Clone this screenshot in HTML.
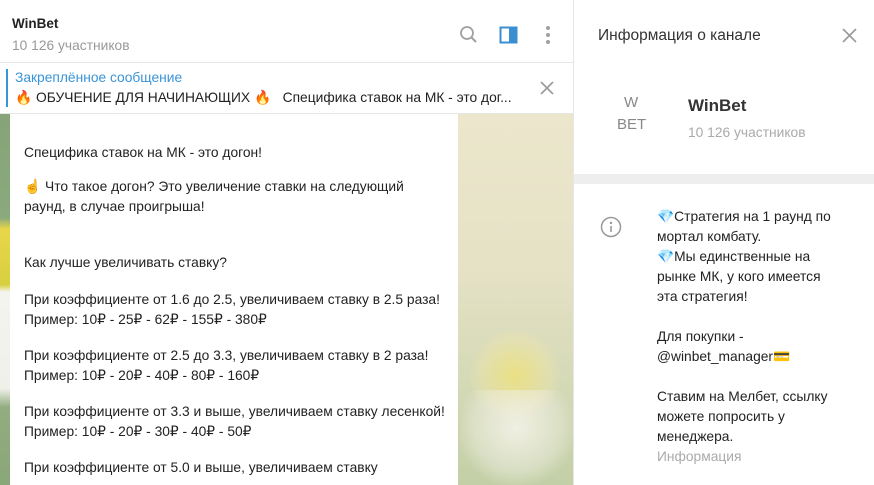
<!DOCTYPE html>
<html><head><meta charset="utf-8"><style>
*{margin:0;padding:0;box-sizing:border-box}
body{width:874px;height:485px;overflow:hidden;background:#fff;font-family:"Liberation Sans","DejaVu Sans",sans-serif;position:relative;color:#222}
.abs{position:absolute}
.t{position:absolute;font-size:13.8px;white-space:nowrap;color:#222}
</style></head><body>
<!-- left header -->
<div class="abs" style="left:0;top:0;width:573px;height:63px;border-bottom:1px solid #e6e6e6"></div>
<div class="t" style="left:12px;top:16px;font-weight:bold;font-size:13.5px">WinBet</div>
<div class="t" style="left:12px;top:38px;color:#999">10 126 участников</div>
<svg class="abs" style="left:459px;top:25px" width="20" height="20" viewBox="0 0 20 20"><circle cx="8" cy="8" r="6" fill="none" stroke="#a0a0a0" stroke-width="1.8"/><line x1="12.5" y1="12.5" x2="17" y2="17" stroke="#a0a0a0" stroke-width="2"/></svg>
<svg class="abs" style="left:499px;top:25px" width="20" height="20" viewBox="0 0 20 20"><rect x="1.5" y="2.5" width="16" height="15" fill="none" stroke="#3a8fd0" stroke-width="2"/><rect x="10" y="2.5" width="7.5" height="15" fill="#3a8fd0"/></svg>
<svg class="abs" style="left:544px;top:25px" width="8" height="20" viewBox="0 0 8 20"><circle cx="4" cy="3" r="2" fill="#a0a0a0"/><circle cx="4" cy="10" r="2" fill="#a0a0a0"/><circle cx="4" cy="17" r="2" fill="#a0a0a0"/></svg>
<!-- pinned -->
<div class="abs" style="left:0;top:64px;width:573px;height:50px;border-bottom:1px solid #e6e6e6"></div>
<div class="abs" style="left:6px;top:69px;width:2px;height:38px;background:#3a95d8"></div>
<div class="t" style="left:15px;top:70px;color:#3a95d8">Закреплённое сообщение</div>
<div class="t" style="left:15px;top:90px">🔥 ОБУЧЕНИЕ ДЛЯ НАЧИНАЮЩИХ 🔥&nbsp;&nbsp; Специфика ставок на МК - это дог...</div>
<svg class="abs" style="left:540px;top:81px" width="14" height="14" viewBox="0 0 14 14"><path d="M1 1L13 13M13 1L1 13" stroke="#999" stroke-width="1.6"/></svg>
<!-- chat bg -->
<div class="abs" style="left:0;top:114px;width:10px;height:371px;background:linear-gradient(#86a477 0,#8aa97c 28%,#e8d64a 31%,#d8cf40 46%,#f4f4ee 48%,#f0f0ea 74%,#92ad80 79%,#8aa77a 100%)"></div>
<div class="abs" style="left:458px;top:114px;width:115px;height:371px;background:linear-gradient(#ece7cc 0,#e6e2c6 40%,#d6dab8 70%,#c3cfa6 100%)"></div>
<div class="abs" style="left:470px;top:330px;width:90px;height:90px;border-radius:50%;background:radial-gradient(rgba(240,225,120,0.8),rgba(235,228,170,0.5) 55%,transparent 75%)"></div>
<div class="abs" style="left:460px;top:390px;width:113px;height:95px;background:radial-gradient(ellipse at 50% 40%,rgba(244,242,232,0.9),rgba(240,240,230,0.4) 55%,transparent 75%)"></div>
<div class="abs" style="left:10px;top:114px;width:448px;height:371px;background:#fff"></div>
<div class="t" style="left:24px;top:145px">Специфика ставок на МК - это догон!</div>
<div class="t" style="left:24px;top:179px">☝️ Что такое догон? Это увеличение ставки на следующий</div>
<div class="t" style="left:24px;top:199px">раунд, в случае проигрыша!</div>
<div class="t" style="left:24px;top:255px">Как лучше увеличивать ставку?</div>
<div class="t" style="left:24px;top:292px">При коэффициенте от 1.6 до 2.5, увеличиваем ставку в 2.5 раза!</div>
<div class="t" style="left:24px;top:312px">Пример: 10₽ - 25₽ - 62₽ - 155₽ - 380₽</div>
<div class="t" style="left:24px;top:348px">При коэффициенте от 2.5 до 3.3, увеличиваем ставку в 2 раза!</div>
<div class="t" style="left:24px;top:368px">Пример: 10₽ - 20₽ - 40₽ - 80₽ - 160₽</div>
<div class="t" style="left:24px;top:404px">При коэффициенте от 3.3 и выше, увеличиваем ставку лесенкой!</div>
<div class="t" style="left:24px;top:424px">Пример: 10₽ - 20₽ - 30₽ - 40₽ - 50₽</div>
<div class="t" style="left:24px;top:460px">При коэффициенте от 5.0 и выше, увеличиваем ставку</div>
<!-- divider -->
<div class="abs" style="left:573px;top:0;width:1px;height:485px;background:#e6e6e6"></div>
<!-- right panel -->
<div class="t" style="left:598px;top:27px;font-size:15.5px;color:#333">Информация о канале</div>
<svg class="abs" style="left:842px;top:28px" width="15" height="15" viewBox="0 0 15 15"><path d="M1 1L14 14M14 1L1 14" stroke="#999" stroke-width="1.6"/></svg>
<div class="t" style="left:624px;top:94px;color:#888;font-size:15px">W</div>
<div class="t" style="left:617px;top:116px;color:#888;font-size:15px">BET</div>
<div class="t" style="left:688px;top:96px;font-weight:bold;font-size:17px;color:#333">WinBet</div>
<div class="t" style="left:688px;top:125px;color:#aaa">10 126 участников</div>
<div class="abs" style="left:574px;top:174px;width:300px;height:10px;background:#eeeeee"></div>
<svg class="abs" style="left:600px;top:216px" width="22" height="22" viewBox="0 0 22 22"><circle cx="11" cy="11" r="9.5" fill="none" stroke="#999" stroke-width="1.5"/><circle cx="11" cy="7" r="1.2" fill="#999"/><line x1="11" y1="10" x2="11" y2="16" stroke="#999" stroke-width="1.6"/></svg>
<div class="t" style="left:657px;top:209px">💎Стратегия на 1 раунд по</div>
<div class="t" style="left:657px;top:229px">мортал комбату.</div>
<div class="t" style="left:657px;top:249px">💎Мы единственные на</div>
<div class="t" style="left:657px;top:269px">рынке МК, у кого имеется</div>
<div class="t" style="left:657px;top:289px">эта стратегия!</div>
<div class="t" style="left:657px;top:329px">Для покупки -</div>
<div class="t" style="left:657px;top:349px">@winbet_manager💳</div>
<div class="t" style="left:657px;top:389px">Ставим на Мелбет, ссылку</div>
<div class="t" style="left:657px;top:409px">можете попросить у</div>
<div class="t" style="left:657px;top:429px">менеджера.</div>
<div class="t" style="left:657px;top:449px;color:#aaa">Информация</div>
</body></html>
